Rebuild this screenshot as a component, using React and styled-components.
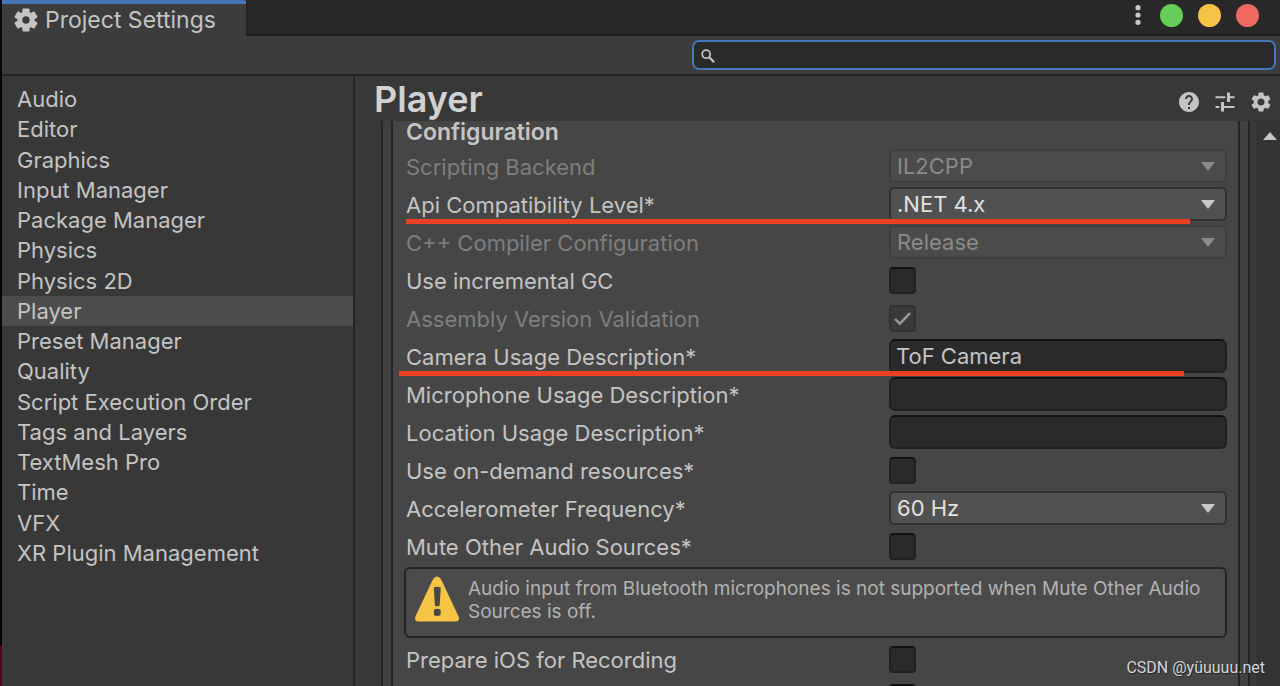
import { useState } from 'react';
import styled, { createGlobalStyle, css } from 'styled-components';
import { MdHelp, MdSettings } from 'react-icons/md';

const GlobalStyle = createGlobalStyle`
  * {
    box-sizing: border-box;
  }

  body {
    margin: 0;
    background: #383838;
    color: #c4c4c4;
    font-family: Inter, 'Liberation Sans', sans-serif;
    font-size: 22px;
    line-height: 30px;
  }

  button, input, select {
    margin: 0;
    font: inherit;
    color: inherit;
  }
`;

const Window = styled.div`
  position: relative;
  display: flex;
  flex-direction: column;
  height: 100vh;
  overflow: hidden;
  border-left: 2px solid #08060c;
  border-image: linear-gradient(#08060c 94%, #4a0a28 94%) 1;
  background: #383838;
`;

const TabBar = styled.header`
  display: flex;
  flex-shrink: 0;
  justify-content: space-between;
  height: 36px;
  background: #282828;
  box-shadow: inset 0 -2px #202020;
`;

const Tab = styled.button`
  display: flex;
  align-items: center;
  gap: 7px;
  width: 245px;
  padding: 0 12px 1px;
  border: 0;
  border-top: 4px solid #4676b8;
  border-right: 1px solid #202020;
  border-radius: 0 4px 0 0;
  background: #3c3c3c;
  font-size: 23px;
  white-space: nowrap;
`;

const WindowControls = styled.div`
  display: flex;
  align-items: center;
  gap: 15px;
  height: 30px;
  padding-right: 21px;
`;

const MenuButton = styled.button`
  display: flex;
  padding: 0 4px 0 0;
  border: 0;
  background: none;
`;

const RoundButton = styled.button`
  width: 23px;
  height: 23px;
  padding: 0;
  border: 0;
  border-radius: 50%;
  background: ${({ $color }) => $color};
`;

const Toolbar = styled.div`
  display: flex;
  flex-shrink: 0;
  justify-content: flex-end;
  height: 40px;
  padding: 4px 4px 0 0;
  border-bottom: 2px solid #232323;
  background: #3c3c3c;
`;

const SearchBox = styled.label`
  display: flex;
  align-items: center;
  gap: 8px;
  width: 584px;
  height: 30px;
  padding: 1px 7px 0;
  border: 2px solid #4676b8;
  border-radius: 7px;
  background: #2a2a2a;
`;

const SearchInput = styled.input`
  flex: 1;
  min-width: 0;
  height: 24px;
  padding: 0;
  border: 0;
  outline: 0;
  background: none;
  font-size: 18px;
`;

const Body = styled.div`
  display: flex;
  flex: 1;
  min-height: 0;
`;

const Sidebar = styled.nav`
  flex-shrink: 0;
  width: 353px;
  padding-top: 8px;
  border-right: 2px solid #252525;
`;

const CategoryList = styled.ul`
  display: grid;
  grid-auto-rows: 1fr;
  min-height: 484px;
  margin: 0;
  padding: 0;
  list-style: none;
`;

const Category = styled.a`
  display: flex;
  align-items: center;
  height: 100%;
  padding-left: 15px;
  background: ${({ $active }) => ($active ? '#4d4d4d' : 'transparent')};
  color: inherit;
  text-decoration: none;
`;

const Main = styled.main`
  display: flex;
  flex: 1;
  flex-direction: column;
  min-width: 0;
`;

const MainHeader = styled.div`
  display: flex;
  flex-shrink: 0;
  align-items: center;
  justify-content: space-between;
  height: 45px;
  padding: 0 7px 0 19px;
`;

const Title = styled.h1`
  margin: 0;
  color: #d2d2d2;
  font-size: 36px;
  font-weight: 600;
  line-height: 44px;
`;

const HeaderActions = styled.div`
  display: flex;
  gap: 12px;
  padding-top: 7px;
`;

const IconButton = styled.button`
  display: flex;
  padding: 0;
  border: 0;
  background: none;
`;

const ScrollArea = styled.div`
  display: flex;
  flex: 1;
  min-height: 0;
`;

const OuterFrame = styled.div`
  flex: 1;
  min-width: 0;
  margin: 0 7px 0 26px;
  padding: 0 8px;
  border: solid #252525;
  border-width: 0 2px;
  background: #404040;
`;

const InnerFrame = styled.section`
  min-height: 100%;
  padding: 0 11px;
  border: solid #252525;
  border-width: 0 2px;
  background: #464646;
`;

const Scrollbar = styled.div`
  display: flex;
  align-items: flex-start;
  justify-content: flex-end;
  width: 23px;
  padding: 11px 3px 0 0;
  border-left: 1px solid #2e2e2e;
  background: #343434;
`;

const SectionTitle = styled.h2`
  height: 26px;
  margin: 0;
  padding-left: 2px;
  font-size: 23px;
  font-weight: 600;
  line-height: 23px;
`;

const Row = styled.div`
  position: relative;
  display: flex;
  align-items: center;
  height: 38px;
  padding-left: 2px;
`;

const RowLabel = styled.label`
  flex-shrink: 0;
  width: 483px;
  padding-top: 1px;
  color: ${({ $disabled }) => ($disabled ? '#7e7e7e' : '#c4c4c4')};
  white-space: nowrap;
`;

const Underline = styled.span`
  position: absolute;
  right: ${({ $right }) => $right}px;
  bottom: -1px;
  left: ${({ $left }) => $left}px;
  z-index: 1;
  height: 5px;
  background: #eb4025;
`;

const SelectWrap = styled.div`
  position: relative;
  display: flex;
  flex: 1;
  color: ${({ $disabled }) => ($disabled ? '#8a8a8a' : '#e2e2e2')};

  svg {
    position: absolute;
    top: 13px;
    right: 12px;
    fill: ${({ $disabled }) => ($disabled ? '#8a8a8a' : '#c8c8c8')};
    pointer-events: none;
  }
`;

const Select = styled.select`
  flex: 1;
  height: 34px;
  padding: 0 36px 2px 6px;
  border: 2px solid #303030;
  border-radius: 5px;
  background: #515151;
  appearance: none;

  &:disabled {
    border-color: #3e3e3e;
    background: #4b4b4b;
    opacity: 1;
  }
`;

const darkField = css`
  border: 2px solid #212121;
  border-top-color: #111111;
  background: #2a2a2a;
`;

const TextInput = styled.input`
  ${darkField}
  flex: 1;
  min-width: 0;
  height: 34px;
  padding: 0 5px;
  border-radius: 6px;
`;

const CheckWrap = styled.span`
  display: grid;

  > * {
    grid-area: 1 / 1;
  }

  svg {
    pointer-events: none;
  }
`;

const Checkbox = styled.input`
  ${darkField}
  width: 27px;
  height: 27px;
  border-radius: 4px;
  appearance: none;

  &:disabled {
    border-color: #323232;
    background: #3a3a3a;
  }
`;

const HelpBox = styled.div`
  display: flex;
  gap: 8px;
  min-height: 71px;
  margin: 2px 0;
  padding: 7px 8px;
  border: 2px solid #242424;
  border-radius: 6px;
  background: #4b4b4b;
  color: #b2b2b2;
  font-size: 19px;
  line-height: 23px;

  svg {
    flex-shrink: 0;
  }

  p {
    margin: 1px 0 0;
  }
`;

const Watermark = styled.div`
  position: absolute;
  right: 15px;
  bottom: 6px;
  color: #d6d6d6;
  font-family: Roboto, 'Liberation Sans', sans-serif;
  font-size: 16px;
  line-height: 24px;
  text-shadow: 1px 1px 1px #222222;
`;

const categories = [
  'Audio',
  'Editor',
  'Graphics',
  'Input Manager',
  'Package Manager',
  'Physics',
  'Physics 2D',
  'Player',
  'Preset Manager',
  'Quality',
  'Script Execution Order',
  'Tags and Layers',
  'TextMesh Pro',
  'Time',
  'VFX',
  'XR Plugin Management'
];

const settings = [
  { id: 'backend', label: 'Scripting Backend', type: 'select', value: 'IL2CPP', disabled: true },
  { id: 'api', label: 'Api Compatibility Level*', type: 'select', value: '.NET 4.x', underline: [2, 37] },
  { id: 'cpp', label: 'C++ Compiler Configuration', type: 'select', value: 'Release', disabled: true },
  { id: 'gc', label: 'Use incremental GC', type: 'check' },
  { id: 'assembly', label: 'Assembly Version Validation', type: 'check', value: true, disabled: true },
  { id: 'camera', label: 'Camera Usage Description*', type: 'text', value: 'ToF Camera', underline: [-5, 43] },
  { id: 'microphone', label: 'Microphone Usage Description*', type: 'text', value: '' },
  { id: 'location', label: 'Location Usage Description*', type: 'text', value: '' },
  { id: 'resources', label: 'Use on-demand resources*', type: 'check' },
  { id: 'accelerometer', label: 'Accelerometer Frequency*', type: 'select', value: '60 Hz' },
  { id: 'mute', label: 'Mute Other Audio Sources*', type: 'check' }
];

const GearIcon = () => (
  <svg width="24" height="24" viewBox="0 0 24 24" aria-hidden="true">
    <circle cx="12" cy="12" r="6.2" fill="none" stroke="#c4c4c4" strokeWidth="5" />
    {[0, 60, 120, 180, 240, 300].map(angle => (
      <rect
        key={angle}
        x="8.4"
        y="0.4"
        width="7.2"
        height="5"
        rx="1"
        fill="#c4c4c4"
        transform={`rotate(${angle} 12 12)`}
      />
    ))}
  </svg>
);

const DotsIcon = () => (
  <svg width="6" height="20" viewBox="0 0 6 20" fill="#c8c8c8" aria-hidden="true">
    <circle cx="3" cy="2.7" r="2.6" />
    <circle cx="3" cy="10" r="2.6" />
    <circle cx="3" cy="17.3" r="2.6" />
  </svg>
);

const SearchIcon = () => (
  <svg width="14" height="14" viewBox="0 0 14 14" fill="none" stroke="#c4c4c4" aria-hidden="true">
    <circle cx="5.2" cy="5.2" r="4" strokeWidth="1.8" />
    <path d="M8.2 8.2L13.2 13.2" strokeWidth="2.2" />
  </svg>
);

const PresetIcon = () => (
  <svg width="24" height="24" viewBox="0 0 24 24" fill="#c4c4c4" aria-hidden="true">
    <path d="M2.500 6.300H12.300V8.300H2.500ZM14 2.500H17V12H14ZM17 6.300H21.500V8.300H17Z" />
    <path d="M2.500 16H6.400V18H2.500ZM8 12H11V21.500H8ZM11 16H21.500V18H11Z" />
  </svg>
);

const WarningIcon = () => (
  <svg width="46" height="46" viewBox="0 0 46 46" aria-hidden="true">
    <path
      d="M19.500 2.4Q23 -1.600 26.500 2.4Q28 5 30 9.500L44.600 40.500Q46 45.500 41.500 45.500H4.500Q0 45.500 1.400 40.500L16 9.500Q18 5 19.500 2.400Z"
      fill="#f7c546"
    />
    <path d="M19.800 11.500Q23 9.800 26.800 11.500L25.700 29.500Q23 31.200 20.900 29.500Z" fill="#474747" />
    <path d="M20.200 33.500Q23.200 31.800 26.300 33.500Q27.700 36.500 26.300 39.200Q23.200 40.800 20.200 39.200Q18.900 36.500 20.200 33.500Z" fill="#474747" />
  </svg>
);

function Field({ id, type, value, disabled }) {
  const [current, setCurrent] = useState(value ?? false);

  if (type === 'select') {
    return (
      <SelectWrap $disabled={disabled}>
        <Select id={id} disabled={disabled}>
          <option>{value}</option>
        </Select>
        <svg width="14" height="9" viewBox="0 0 14 9" aria-hidden="true">
          <path d="M0 0H14L7 9Z" />
        </svg>
      </SelectWrap>
    );
  }

  if (type === 'text') {
    return <TextInput id={id} type="text" value={current} onChange={e => setCurrent(e.target.value)} />;
  }

  return (
    <CheckWrap>
      <Checkbox
        id={id}
        type="checkbox"
        checked={current}
        disabled={disabled}
        onChange={e => setCurrent(e.target.checked)}
      />
      {current && (
        <svg width="27" height="27" viewBox="0 0 27 27" aria-hidden="true">
          <path d="M6 14L10.800 18.700L21 8.200" fill="none" stroke="#9a9a9a" strokeWidth="2.4" />
        </svg>
      )}
    </CheckWrap>
  );
}

function SettingRow({ label, underline, ...field }) {
  return (
    <Row>
      <RowLabel htmlFor={field.id} $disabled={field.disabled}>
        {label}
      </RowLabel>
      <Field {...field} />
      {underline && <Underline $left={underline[0]} $right={underline[1]} />}
    </Row>
  );
}

export default function App() {
  const [active, setActive] = useState('Player');

  return (
    <Window>
      <GlobalStyle />
      <TabBar>
        <Tab type="button">
          <GearIcon />
          Project Settings
        </Tab>
        <WindowControls>
          <MenuButton type="button" aria-label="Menu">
            <DotsIcon />
          </MenuButton>
          <RoundButton type="button" aria-label="Maximize" $color="#65cd58" />
          <RoundButton type="button" aria-label="Minimize" $color="#f7c346" />
          <RoundButton type="button" aria-label="Close" $color="#ee6a60" />
        </WindowControls>
      </TabBar>

      <Toolbar>
        <SearchBox>
          <SearchIcon />
          <SearchInput type="text" aria-label="Search" />
        </SearchBox>
      </Toolbar>

      <Body>
        <Sidebar>
          <CategoryList>
            {categories.map(name => (
              <li key={name}>
                <Category href="#" $active={name === active} onClick={() => setActive(name)}>
                  {name}
                </Category>
              </li>
            ))}
          </CategoryList>
        </Sidebar>

        <Main>
          <MainHeader>
            <Title>Player</Title>
            <HeaderActions>
              <IconButton type="button" aria-label="Help">
                <MdHelp size={24} color="#c4c4c4" />
              </IconButton>
              <IconButton type="button" aria-label="Presets">
                <PresetIcon />
              </IconButton>
              <IconButton type="button" aria-label="Settings">
                <MdSettings size={24} color="#c4c4c4" />
              </IconButton>
            </HeaderActions>
          </MainHeader>

          <ScrollArea>
            <OuterFrame>
              <InnerFrame>
                <SectionTitle>Configuration</SectionTitle>
                {settings.map(setting => (
                  <SettingRow key={setting.id} {...setting} />
                ))}
                <HelpBox>
                  <WarningIcon />
                  <p>
                    Audio input from Bluetooth microphones is not supported when Mute Other Audio
                    Sources is off.
                  </p>
                </HelpBox>
                <SettingRow id="recording" label="Prepare iOS for Recording" type="check" />
                <SettingRow id="speakers" label="" type="check" />
              </InnerFrame>
            </OuterFrame>
            <Scrollbar>
              <svg width="14" height="8" viewBox="0 0 14 8" fill="#c4c4c4" aria-hidden="true">
                <path d="M0 8L7 0L14 8Z" />
              </svg>
            </Scrollbar>
          </ScrollArea>
        </Main>
      </Body>
      <Watermark>CSDN @yüuuuu.net</Watermark>
    </Window>
  );
}
